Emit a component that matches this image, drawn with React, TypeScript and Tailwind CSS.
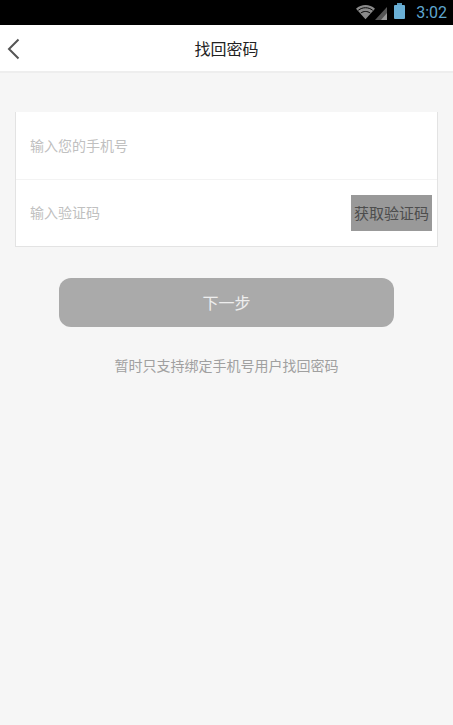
import React from 'react';

const FONT = "font-['Noto_Sans_CJK_SC','Noto_Sans',sans-serif]";

const StatusBar: React.FC = () => (
  <div className="h-[25px] bg-black flex items-center justify-end pr-[6px] shrink-0">
    {/* wifi */}
    <svg width="19" height="16" viewBox="0 0 20 16" className="mt-[-2px]">
      <path d="M0 4.5 C5.5 -0.5 14.5 -0.5 20 4.5 L10 15.5 Z" fill="#8a8a8a" />
      <path d="M2.4 6.2 C7 2.6 13 2.6 17.6 6.2" stroke="#000" strokeWidth="1" fill="none" />
      <path d="M5 9.1 C8 6.9 12 6.9 15 9.1" stroke="#000" strokeWidth="1" fill="none" />
    </svg>
    {/* signal */}
    <svg width="13" height="15" viewBox="0 0 13 15" className="mt-[0px]">
      <path d="M0 15 L12 2 L12 15 Z" fill="#555" />
      <path d="M6 15 L12 8 L12 15 Z" fill="#9a9a9a" />
    </svg>
    {/* battery */}
    <div className="ml-[6px] mt-[-3px] flex flex-col items-center">
      <div className="w-[5px] h-[2px] bg-[#5a9cbf]" />
      <div className="w-[11px] h-[14px] bg-[#6ab0d6] rounded-[1px]" />
    </div>
    <span className="ml-[11px] text-[16px] leading-none text-[#5fa6cf] font-['Roboto',sans-serif]">3:02</span>
  </div>
);

const Header: React.FC = () => (
  <div className="relative h-[48px] bg-white border-b-2 border-[#eeeeee] flex items-center justify-center shrink-0">
    <svg width="14" height="22" viewBox="0 0 14 22" className="absolute left-[7px] top-[13px]">
      <path d="M11.5 1.5 L2 11 L11.5 20.5" stroke="#555" strokeWidth="2" fill="none" />
    </svg>
    <span className="text-[16px] leading-none text-[#222]">找回密码</span>
  </div>
);

const App: React.FC = () => {
  return (
    <div className={`w-[453px] h-[725px] bg-[#f6f6f6] flex flex-col overflow-hidden ${FONT}`}>
      <StatusBar />
      <Header />

      <div className="mt-[39px] mx-[15px] bg-white border border-t-0 border-[#e3e3e3] border-t-transparent">
        <div className="h-[68px] border-b border-[#f3f3f3] flex items-center pl-[14px] pb-[2px]">
          <span className="text-[14px] leading-none text-[#c0c0c0]">输入您的手机号</span>
        </div>
        <div className="h-[66px] flex items-center justify-between pl-[14px] pr-[5px]">
          <span className="text-[14px] leading-none text-[#c0c0c0] mb-[2px]">输入验证码</span>
          <div className="w-[81px] h-[36px] bg-[#999999] flex items-center justify-center pb-[2px]">
            <span className="text-[15px] leading-none text-[#4d4d4d]">获取验证码</span>
          </div>
        </div>
      </div>

      <div className="mt-[31px] mx-[59px] h-[49px] bg-[#aaaaaa] rounded-[12px] flex items-center justify-center pb-[2px]">
        <span className="text-[16px] leading-none text-[#eeeeee]">下一步</span>
      </div>

      <div className="mt-[31px] text-center text-[14px] leading-none text-[#a0a0a0]">
        暂时只支持绑定手机号用户找回密码
      </div>
    </div>
  );
};

export default App;
